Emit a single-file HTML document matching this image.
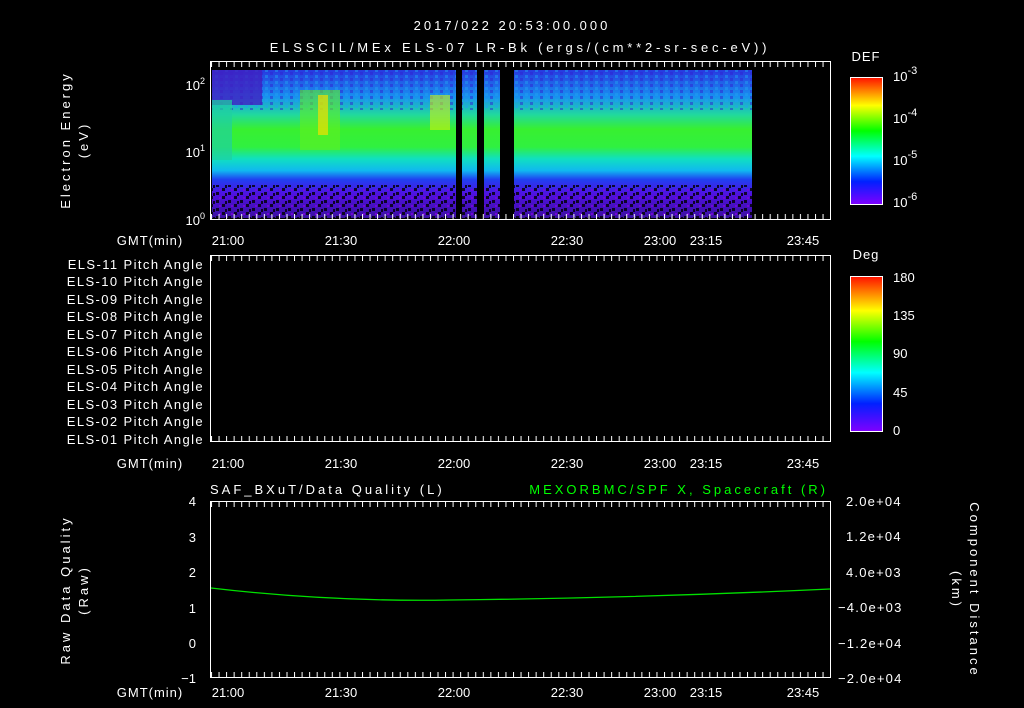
<!DOCTYPE html>
<html><head><meta charset="utf-8"><style>
html,body{margin:0;padding:0;background:#000;}
svg{display:block}
text{font-family:"Liberation Sans",sans-serif;fill:#fff;font-size:13px}
.w{letter-spacing:3px}
</style></head><body>
<svg width="1024" height="708" viewBox="0 0 1024 708" xmlns="http://www.w3.org/2000/svg">
<defs>
<linearGradient id="spec" x1="0" y1="0" x2="0" y2="1">
<stop offset="0" stop-color="#2838e0"/>
<stop offset="0.18" stop-color="#1890f0"/>
<stop offset="0.3" stop-color="#20d8a0"/>
<stop offset="0.4" stop-color="#38f030"/>
<stop offset="0.52" stop-color="#30f040"/>
<stop offset="0.6" stop-color="#10e0c0"/>
<stop offset="0.68" stop-color="#10b8f0"/>
<stop offset="0.74" stop-color="#2040f0"/>
<stop offset="0.84" stop-color="#5010e0"/>
<stop offset="1" stop-color="#3a10a0"/>
</linearGradient>
<linearGradient id="cb1" x1="0" y1="0" x2="0" y2="1">
<stop offset="0" stop-color="#ff1000"/><stop offset="0.22" stop-color="#ffff00"/>
<stop offset="0.42" stop-color="#00ff00"/><stop offset="0.62" stop-color="#00ffff"/>
<stop offset="0.82" stop-color="#0020ff"/><stop offset="1" stop-color="#8000ff"/>
</linearGradient>
<pattern id="tk" x="211" y="0" width="7.55" height="10" patternUnits="userSpaceOnUse">
<rect x="0" y="0" width="1" height="10" fill="#fff"/></pattern>
<pattern id="noise" width="12" height="8" patternUnits="userSpaceOnUse">
<rect x="0" y="0" width="3" height="3" fill="#000"/><rect x="6" y="4" width="3" height="3" fill="#000"/>
<rect x="3" y="5" width="2" height="2" fill="#8000e0"/><rect x="9" y="1" width="2" height="3" fill="#000"/></pattern>
<pattern id="noise2" width="10" height="6" patternUnits="userSpaceOnUse">
<rect x="0" y="0" width="3" height="3" fill="#3020d0"/><rect x="5" y="3" width="3" height="3" fill="#20a0f0"/></pattern>
</defs>
<text x="512" y="30" text-anchor="middle" font-size="16" class="w">2017/022 20:53:00.000</text>
<text x="520" y="52" text-anchor="middle" font-size="16" style="letter-spacing:3.8px">ELSSCIL/MEx ELS-07 LR-Bk  (ergs/(cm**2-sr-sec-eV))</text>

<!-- panel 1 -->
<rect x="212" y="70" width="540" height="148" fill="url(#spec)"/>
<rect x="212" y="70" width="540" height="40" fill="url(#noise2)" opacity="0.5"/>
<rect x="212" y="70" width="50" height="35" fill="#4020c0" opacity="0.8"/>
<rect x="212" y="100" width="20" height="60" fill="#20d0a0" opacity="0.7"/>
<rect x="300" y="90" width="40" height="60" fill="#60f020" opacity="0.6"/>
<rect x="318" y="95" width="10" height="40" fill="#f0e000" opacity="0.7"/>
<rect x="430" y="95" width="20" height="35" fill="#d0f010" opacity="0.6"/>
<rect x="212" y="185" width="540" height="33" fill="url(#noise)" opacity="0.8"/>
<rect x="456" y="70" width="6" height="148" fill="#000"/>
<rect x="477" y="70" width="7" height="148" fill="#000"/>
<rect x="500" y="70" width="14" height="148" fill="#000"/>
<rect x="210.5" y="61.5" width="620" height="158" fill="none" stroke="#fff"/>
<rect x="211" y="62" width="619" height="5" fill="url(#tk)"/>
<rect x="211" y="214" width="619" height="5" fill="url(#tk)"/>
<text x="205" y="90" text-anchor="end">10<tspan dy="-6" font-size="9">2</tspan></text>
<text x="205" y="157" text-anchor="end">10<tspan dy="-6" font-size="9">1</tspan></text>
<text x="205" y="225" text-anchor="end">10<tspan dy="-6" font-size="9">0</tspan></text>
<text transform="translate(70,140) rotate(-90)" text-anchor="middle" font-size="14" class="w">Electron Energy</text>
<text transform="translate(88,140) rotate(-90)" text-anchor="middle" font-size="14" class="w">(eV)</text>
<text x="150" y="245" text-anchor="middle" font-size="13" style="letter-spacing:1px">GMT(min)</text>
<g font-size="13" text-anchor="middle">
<text x="228" y="245">21:00</text><text x="341" y="245">21:30</text><text x="454" y="245">22:00</text><text x="567" y="245">22:30</text><text x="660" y="245">23:00</text><text x="706" y="245">23:15</text><text x="803" y="245">23:45</text></g>
<text x="866" y="61" text-anchor="middle" font-size="16" style="letter-spacing:1px">DEF</text>
<rect x="850.5" y="77.5" width="32" height="127" fill="url(#cb1)" stroke="#fff"/>
<text x="893" y="81" font-size="16">10<tspan dy="-7" font-size="11">-3</tspan></text>
<text x="893" y="123" font-size="16">10<tspan dy="-7" font-size="11">-4</tspan></text>
<text x="893" y="165" font-size="16">10<tspan dy="-7" font-size="11">-5</tspan></text>
<text x="893" y="207" font-size="16">10<tspan dy="-7" font-size="11">-6</tspan></text>

<!-- panel 2 -->
<rect x="210.5" y="255.5" width="620" height="186" fill="none" stroke="#fff"/>
<rect x="211" y="256" width="619" height="5" fill="url(#tk)"/>
<rect x="211" y="436" width="619" height="5" fill="url(#tk)"/>
<g font-size="12.5" text-anchor="end" style="letter-spacing:1.4px">
<text x="204" y="269">ELS-11 Pitch Angle</text><text x="204" y="286">ELS-10 Pitch Angle</text>
<text x="204" y="304">ELS-09 Pitch Angle</text><text x="204" y="321">ELS-08 Pitch Angle</text>
<text x="204" y="339">ELS-07 Pitch Angle</text><text x="204" y="356">ELS-06 Pitch Angle</text>
<text x="204" y="374">ELS-05 Pitch Angle</text><text x="204" y="391">ELS-04 Pitch Angle</text>
<text x="204" y="409">ELS-03 Pitch Angle</text><text x="204" y="426">ELS-02 Pitch Angle</text>
<text x="204" y="444">ELS-01 Pitch Angle</text></g>
<text x="150" y="468" text-anchor="middle" font-size="13" style="letter-spacing:1px">GMT(min)</text>
<g font-size="13" text-anchor="middle">
<text x="228" y="468">21:00</text><text x="341" y="468">21:30</text><text x="454" y="468">22:00</text><text x="567" y="468">22:30</text><text x="660" y="468">23:00</text><text x="706" y="468">23:15</text><text x="803" y="468">23:45</text></g>
<text x="866" y="259" text-anchor="middle" font-size="16" style="letter-spacing:1px">Deg</text>
<rect x="850.5" y="276.5" width="32" height="155" fill="url(#cb1)" stroke="#fff"/>
<g font-size="16"><text x="893" y="282">180</text><text x="893" y="320">135</text><text x="893" y="358">90</text><text x="893" y="397">45</text><text x="893" y="435">0</text></g>

<!-- panel 3 -->
<text x="210" y="494" font-size="15" class="w">SAF_BXuT/Data Quality (L)</text>
<text x="828" y="494" text-anchor="end" font-size="15" class="w" style="fill:#00ff00">MEXORBMC/SPF X, Spacecraft (R)</text>
<rect x="210.5" y="501.5" width="620" height="176" fill="none" stroke="#fff"/>
<rect x="211" y="502" width="619" height="5" fill="url(#tk)"/>
<rect x="211" y="672" width="619" height="5" fill="url(#tk)"/>
<path d="M211,588 Q330,602 450,600 Q640,598 830,589" fill="none" stroke="#00e000" stroke-width="1.3"/>
<g font-size="13" text-anchor="end">
<text x="196" y="506">4</text><text x="196" y="542">3</text><text x="196" y="577">2</text><text x="196" y="613">1</text><text x="196" y="648">0</text><text x="196" y="683">−1</text></g>
<g font-size="12" style="letter-spacing:1.2px"><text x="846" y="506">2.0e+04</text><text x="846" y="541">1.2e+04</text><text x="846" y="577">4.0e+03</text><text x="838" y="612">−4.0e+03</text><text x="838" y="648">−1.2e+04</text><text x="838" y="683">−2.0e+04</text></g>
<text transform="translate(70,590) rotate(-90)" text-anchor="middle" font-size="14" class="w">Raw Data Quality</text>
<text transform="translate(88,590) rotate(-90)" text-anchor="middle" font-size="14" class="w">(Raw)</text>
<text transform="translate(970,590) rotate(90)" text-anchor="middle" font-size="14" class="w">Component Distance</text>
<text transform="translate(952,590) rotate(90)" text-anchor="middle" font-size="14" class="w">(km)</text>
<text x="150" y="697" text-anchor="middle" font-size="13" style="letter-spacing:1px">GMT(min)</text>
<g font-size="13" text-anchor="middle">
<text x="228" y="697">21:00</text><text x="341" y="697">21:30</text><text x="454" y="697">22:00</text><text x="567" y="697">22:30</text><text x="660" y="697">23:00</text><text x="706" y="697">23:15</text><text x="803" y="697">23:45</text></g>
</svg>
</body></html>
